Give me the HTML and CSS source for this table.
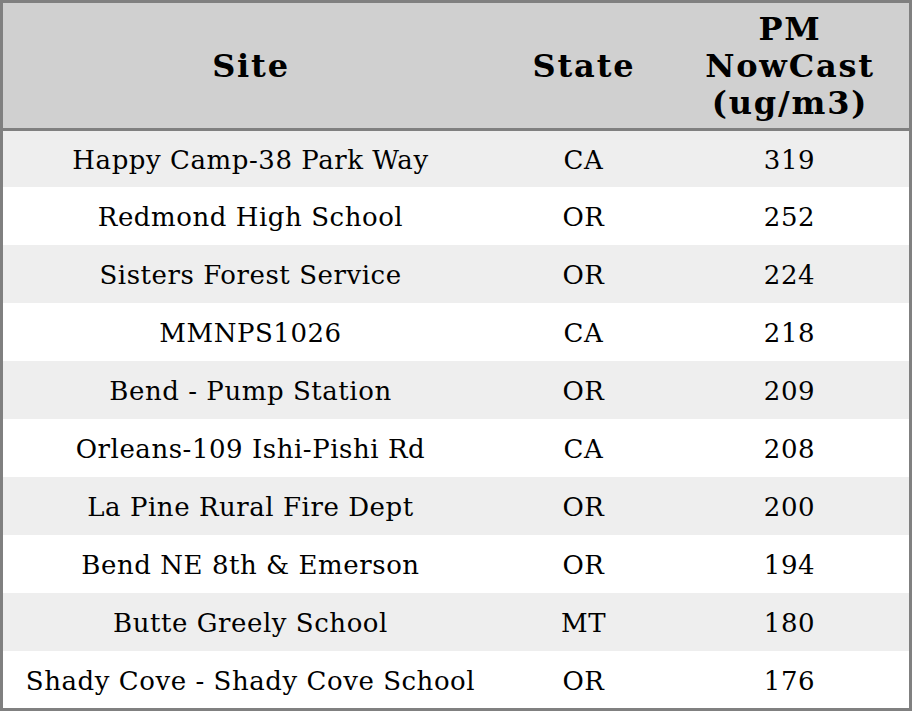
FILE: index.html
```html
<!DOCTYPE html>
<html>
<head>
<meta charset="utf-8">
<link rel="stylesheet" href="styles.css">
</head>
<body>
<table class="aq">
  <colgroup>
    <col class="c-site">
    <col class="c-state">
    <col class="c-pm">
  </colgroup>
  <thead>
    <tr>
      <th>Site</th>
      <th>State</th>
      <th class="pm">PM NowCast (ug/m3)</th>
    </tr>
  </thead>
  <tbody>
    <tr><td>Happy Camp-38 Park Way</td><td>CA</td><td>319</td></tr>
    <tr><td>Redmond High School</td><td>OR</td><td>252</td></tr>
    <tr><td>Sisters Forest Service</td><td>OR</td><td>224</td></tr>
    <tr><td>MMNPS1026</td><td>CA</td><td>218</td></tr>
    <tr><td>Bend - Pump Station</td><td>OR</td><td>209</td></tr>
    <tr><td>Orleans-109 Ishi-Pishi Rd</td><td>CA</td><td>208</td></tr>
    <tr><td>La Pine Rural Fire Dept</td><td>OR</td><td>200</td></tr>
    <tr><td>Bend NE 8th &amp; Emerson</td><td>OR</td><td>194</td></tr>
    <tr><td>Butte Greely School</td><td>MT</td><td>180</td></tr>
    <tr><td>Shady Cove - Shady Cove School</td><td>OR</td><td>176</td></tr>
  </tbody>
</table>
</body>
</html>
```
FILE: styles.css
```css
html, body {
  margin: 0;
  padding: 0;
  background: #ffffff;
}

.aq {
  width: 912px;
  border: 3px solid #808080;
  border-collapse: separate;
  border-spacing: 0;
  table-layout: fixed;
  font-family: "DejaVu Serif", serif;
  color: #000000;
}

.c-site { width: 494px; }
.c-state { width: 172px; }
.c-pm { width: 240px; }

.aq th {
  background: #d0d0d0;
  font-size: 32px;
  font-weight: bold;
  line-height: 37px;
  letter-spacing: 1.8px;
  height: 125px;
  padding: 2px 12px 0 14px;
  border-bottom: 3px solid #808080;
  text-align: center;
  vertical-align: middle;
  box-sizing: border-box;
}

.aq thead tr {
  height: 128px;
}

.aq td {
  font-size: 26px;
  line-height: 30px;
  letter-spacing: 0.55px;
  padding: 2px 0 0 1px;
  text-align: center;
  vertical-align: middle;
  white-space: nowrap;
}

.aq tbody tr {
  height: 58px;
}

.aq tbody tr:first-child {
  height: 56px;
}

.aq tbody tr:last-child {
  height: 57px;
}

.aq tbody tr:nth-child(odd) {
  background: #eeeeee;
}
```
